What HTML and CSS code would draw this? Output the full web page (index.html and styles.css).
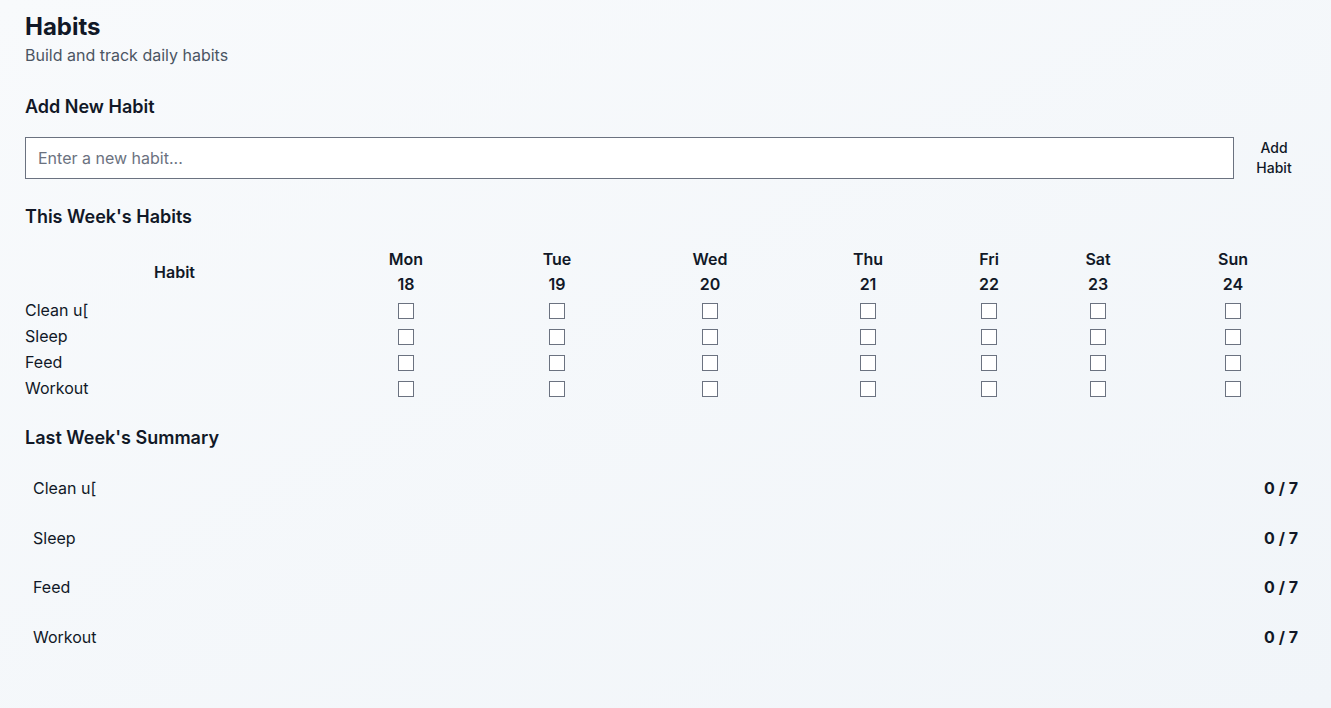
FILE: index.html
```html
<!DOCTYPE html>
<html lang="en">
<head>
<meta charset="utf-8">
<title>Habits</title>
<link rel="stylesheet" href="styles.css">
</head>
<body>
<main class="page">
  <header class="page-header">
    <h1 class="title">Habits</h1>
    <p class="subtitle">Build and track daily habits</p>
  </header>

  <section class="add-section">
    <h2 class="section-title">Add New Habit</h2>
    <form class="add-form" onsubmit="return false">
      <input class="habit-input" type="text" placeholder="Enter a new habit...">
      <button class="add-btn" type="submit">Add Habit</button>
    </form>
  </section>

  <section class="week-section">
    <h2 class="section-title">This Week's Habits</h2>
    <table class="week-table">
      <colgroup>
        <col class="col-habit">
        <col class="col-mon">
        <col class="col-tue">
        <col class="col-wed">
        <col class="col-thu">
        <col class="col-fri">
        <col class="col-sat">
        <col class="col-sun">
      </colgroup>
      <thead>
        <tr>
          <th class="habit-head">Habit</th>
          <th><div>Mon</div><div class="date">18</div></th>
          <th><div>Tue</div><div class="date">19</div></th>
          <th><div>Wed</div><div class="date">20</div></th>
          <th><div>Thu</div><div class="date">21</div></th>
          <th><div>Fri</div><div class="date">22</div></th>
          <th><div>Sat</div><div class="date">23</div></th>
          <th><div>Sun</div><div class="date">24</div></th>
        </tr>
      </thead>
      <tbody>
        <tr>
          <td class="habit-name">Clean u[</td>
          <td><input class="check" type="checkbox"></td>
          <td><input class="check" type="checkbox"></td>
          <td><input class="check" type="checkbox"></td>
          <td><input class="check" type="checkbox"></td>
          <td><input class="check" type="checkbox"></td>
          <td><input class="check" type="checkbox"></td>
          <td><input class="check" type="checkbox"></td>
        </tr>
        <tr>
          <td class="habit-name">Sleep</td>
          <td><input class="check" type="checkbox"></td>
          <td><input class="check" type="checkbox"></td>
          <td><input class="check" type="checkbox"></td>
          <td><input class="check" type="checkbox"></td>
          <td><input class="check" type="checkbox"></td>
          <td><input class="check" type="checkbox"></td>
          <td><input class="check" type="checkbox"></td>
        </tr>
        <tr>
          <td class="habit-name">Feed</td>
          <td><input class="check" type="checkbox"></td>
          <td><input class="check" type="checkbox"></td>
          <td><input class="check" type="checkbox"></td>
          <td><input class="check" type="checkbox"></td>
          <td><input class="check" type="checkbox"></td>
          <td><input class="check" type="checkbox"></td>
          <td><input class="check" type="checkbox"></td>
        </tr>
        <tr>
          <td class="habit-name">Workout</td>
          <td><input class="check" type="checkbox"></td>
          <td><input class="check" type="checkbox"></td>
          <td><input class="check" type="checkbox"></td>
          <td><input class="check" type="checkbox"></td>
          <td><input class="check" type="checkbox"></td>
          <td><input class="check" type="checkbox"></td>
          <td><input class="check" type="checkbox"></td>
        </tr>
      </tbody>
    </table>
  </section>

  <section class="summary-section">
    <h2 class="section-title">Last Week's Summary</h2>
    <ul class="summary-list">
      <li class="summary-row"><span>Clean u[</span><span class="score">0 / 7</span></li>
      <li class="summary-row"><span>Sleep</span><span class="score">0 / 7</span></li>
      <li class="summary-row"><span>Feed</span><span class="score">0 / 7</span></li>
      <li class="summary-row"><span>Workout</span><span class="score">0 / 7</span></li>
    </ul>
  </section>
</main>
</body>
</html>
```

FILE: styles.css
```css
* {
  box-sizing: border-box;
}

html, body {
  margin: 0;
  padding: 0;
  min-height: 100%;
}

body {
  font-family: Inter, "Noto Sans", "DejaVu Sans", sans-serif;
  font-size: 16px;
  line-height: 24px;
  color: #111827;
  background: linear-gradient(to bottom right, #f8fafc, #f1f5f9);
  min-height: 708px;
}

.page {
  padding: 11px 25px 24px;
}

.title {
  margin: 0;
  font-size: 24px;
  line-height: 32px;
  font-weight: 700;
  color: #111827;
}

.subtitle {
  margin: 0;
  color: #4b5563;
  font-size: 16px;
  line-height: 24px;
}

.add-section {
  margin-top: 26px;
}

.section-title {
  margin: 0;
  font-size: 18px;
  line-height: 28px;
  font-weight: 600;
  color: #111827;
}

.add-form {
  display: flex;
  align-items: center;
  gap: 8px;
  margin-top: 16px;
}

.habit-input {
  flex: 1;
  min-width: 0;
  height: 42px;
  padding: 8px 12px;
  border: 1px solid #6b7280;
  border-radius: 0;
  background: #fff;
  font: inherit;
  font-size: 16px;
  line-height: 24px;
  color: #111827;
  outline: none;
}

.habit-input::placeholder {
  color: #6b7280;
}

.add-btn {
  flex: none;
  width: 64px;
  padding: 0 8px;
  border: 0;
  background: transparent;
  font-family: inherit;
  font-size: 14px;
  line-height: 20px;
  font-weight: 500;
  color: #111827;
  text-align: center;
  cursor: pointer;
}

.week-section {
  margin-top: 24px;
}

.week-table {
  width: 100%;
  margin-top: 15px;
  border-collapse: collapse;
  table-layout: fixed;
}

.col-habit { width: 299px; }
.col-mon { width: 164px; }
.col-tue { width: 138px; }
.col-wed { width: 168px; }
.col-thu { width: 148px; }
.col-fri { width: 94px; }
.col-sat { width: 124px; }
.col-sun { width: 146px; }

.week-table th,
.week-table td {
  padding: 1px 0;
}

.week-table th {
  font-weight: 600;
  text-align: center;
  color: #111827;
}

.week-table th .date {
  margin-top: 1px;
}

.week-table td {
  text-align: center;
}

.week-table td.habit-name {
  text-align: left;
}

.check {
  appearance: none;
  -webkit-appearance: none;
  display: inline-block;
  width: 16px;
  height: 16px;
  margin: 0;
  border: 1px solid #6b7280;
  border-radius: 0;
  background: #fff;
  vertical-align: middle;
  position: relative;
  top: -1px;
}

.summary-section {
  margin-top: 23px;
}

.summary-list {
  list-style: none;
  margin: 12px 0 0;
  padding: 0;
}

.summary-row {
  display: flex;
  justify-content: space-between;
  align-items: center;
  padding: 12px 8px 13.67px;
}

.score {
  font-weight: 700;
}
```
